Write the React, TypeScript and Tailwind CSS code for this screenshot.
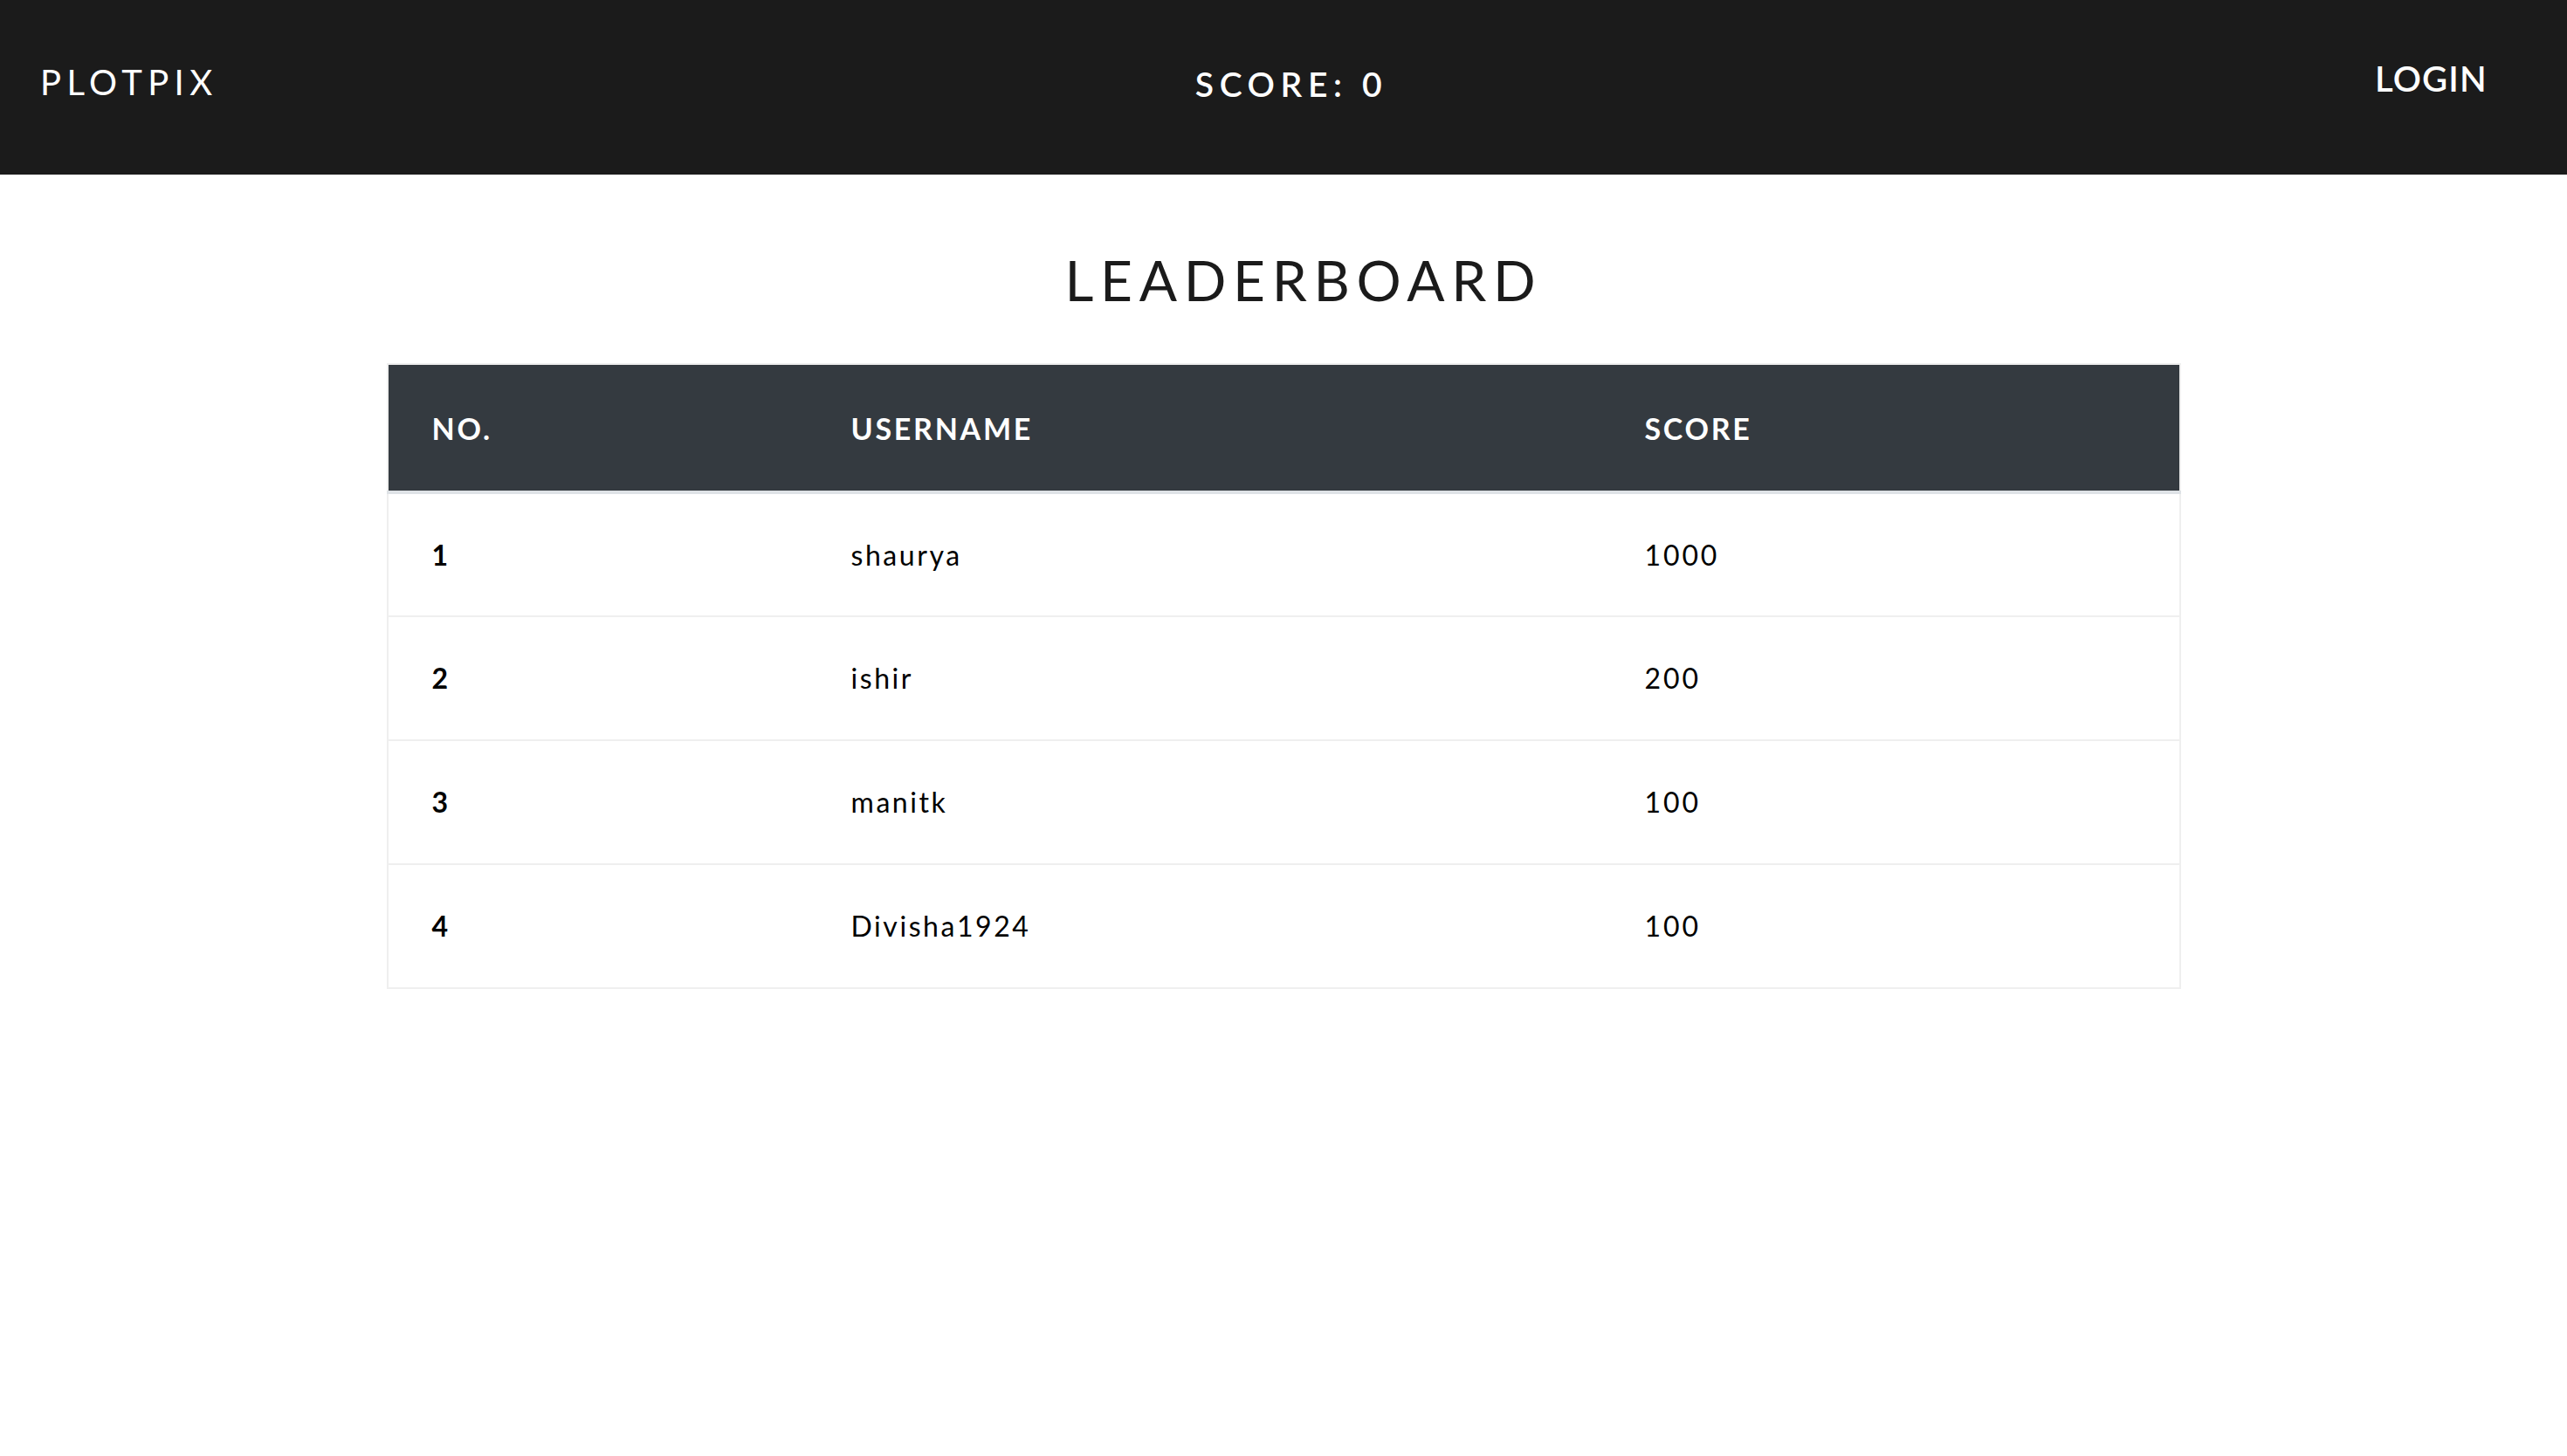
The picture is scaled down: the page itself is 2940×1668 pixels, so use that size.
import React from "react";

const rows = [
  { no: 1, name: "shaurya", score: 1000 },
  { no: 2, name: "ishir", score: 200 },
  { no: 3, name: "manitk", score: 100 },
  { no: 4, name: "Divisha1924", score: 100 },
];

export default function App() {
  return (
    <div className="min-h-screen bg-white" style={{ fontFamily: "Lato, 'Noto Sans', sans-serif" }}>
      <nav className="grid h-[200px] grid-cols-3 items-center bg-[#1b1b1b] px-[46px] text-white">
        <div className="pb-[12px] text-[40px] tracking-[0.16em] leading-none">PLOTPIX</div>
        <div className="pb-[8px] pl-[18px] text-center text-[39px] font-semibold tracking-[0.17em] leading-none">SCORE: 0</div>
        <div className="pb-[20px] pr-[45px] text-right text-[40px] font-semibold tracking-[0.03em] leading-none">LOGIN</div>
      </nav>

      <main className="flex flex-col items-center">
        <h1 className="mt-[89px] mb-[63px] pl-[46px] text-[64px] leading-none tracking-[0.12em] text-[#1b1b1b]">LEADERBOARD</h1>

        <table className="w-[2055px] table-fixed border-collapse border-2 border-[#efefef]">
          <colgroup>
            <col className="w-[483px]" />
            <col className="w-[909px]" />
            <col />
          </colgroup>
          <thead>
            <tr className="h-[147px] border-b-[4px] border-[#dee2e6] bg-[#343a40] text-left text-white">
              <th className="pl-[50px] text-[34px] font-bold tracking-[0.08em]">NO.</th>
              <th className="pl-[48px] text-[34px] font-bold tracking-[0.08em]">USERNAME</th>
              <th className="pl-[48px] text-[34px] font-bold tracking-[0.08em]">SCORE</th>
            </tr>
          </thead>
          <tbody>
            {rows.map((r, i) => (
              <tr
                key={r.no}
                className={`h-[142px] text-[32px] text-black ${i < rows.length - 1 ? "border-b-2 border-[#efefef]" : ""}`}
              >
                <td className="pl-[50px] font-bold tracking-[0.05em]">{r.no}</td>
                <td className="pl-[48px] tracking-[0.08em]">{r.name}</td>
                <td className="pl-[48px] tracking-[0.09em]">{r.score}</td>
              </tr>
            ))}
          </tbody>
        </table>
      </main>
    </div>
  );
}
